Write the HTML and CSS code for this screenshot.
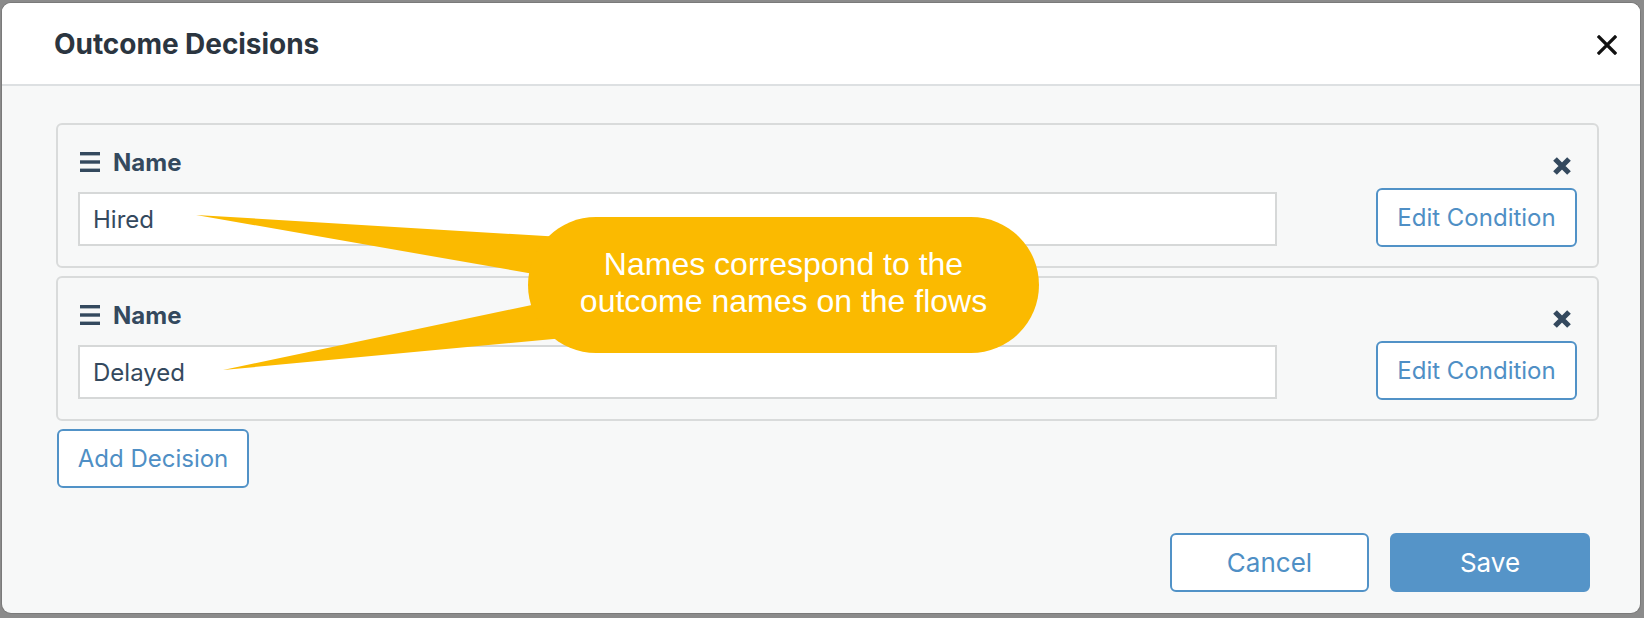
FILE: index.html
```html
<!DOCTYPE html>
<html>
<head>
<meta charset="utf-8">
<link rel="stylesheet" href="styles.css">
</head>
<body>
<div class="backdrop">
  <div class="modal">
    <div class="modal-header">
      <h1 class="modal-title">Outcome Decisions</h1>
      <svg class="close-icon" width="20" height="20" viewBox="0 0 20 20"><path d="M2 2 L18 18 M18 2 L2 18" stroke="#111" stroke-width="3.2" stroke-linecap="square" fill="none"/></svg>
    </div>
    <div class="modal-body">
      <div class="card">
        <div class="card-label">
          <svg class="grip" width="20" height="20" viewBox="0 0 20 20"><rect x="0" y="0" width="20" height="3.4" fill="#34495e"/><rect x="0" y="8.3" width="20" height="3.4" fill="#34495e"/><rect x="0" y="16.6" width="20" height="3.4" fill="#34495e"/></svg>
          <span>Name</span>
        </div>
        <svg class="remove-icon" width="20" height="20" viewBox="0 0 20 20"><path d="M3 3 L17 17 M17 3 L3 17" stroke="#34495e" stroke-width="5.2" stroke-linecap="butt" fill="none"/></svg>
        <input class="text-input" type="text" value="Hired">
        <button class="btn btn-outline btn-edit">Edit Condition</button>
      </div>
      <div class="card">
        <div class="card-label">
          <svg class="grip" width="20" height="20" viewBox="0 0 20 20"><rect x="0" y="0" width="20" height="3.4" fill="#34495e"/><rect x="0" y="8.3" width="20" height="3.4" fill="#34495e"/><rect x="0" y="16.6" width="20" height="3.4" fill="#34495e"/></svg>
          <span>Name</span>
        </div>
        <svg class="remove-icon" width="20" height="20" viewBox="0 0 20 20"><path d="M3 3 L17 17 M17 3 L3 17" stroke="#34495e" stroke-width="5.2" stroke-linecap="butt" fill="none"/></svg>
        <input class="text-input" type="text" value="Delayed">
        <button class="btn btn-outline btn-edit">Edit Condition</button>
      </div>
      <button class="btn btn-outline btn-add">Add Decision</button>
    </div>
    <div class="modal-footer">
      <button class="btn btn-outline btn-footer">Cancel</button>
      <button class="btn btn-primary btn-footer">Save</button>
    </div>
  </div>
</div>

<svg class="callout-tails" width="1644" height="618" viewBox="0 0 1644 618">
  <polygon points="196,215 620,240.5 620,289" fill="#fbba00"/>
  <polygon points="223,370 620,286.4 620,332.7" fill="#fbba00"/>
</svg>
<div class="callout">Names correspond to the<br>outcome names on the flows</div>
</body>
</html>
```

FILE: styles.css
```css
* { box-sizing: border-box; }

html, body {
  margin: 0;
  padding: 0;
}

body {
  width: 1644px;
  height: 618px;
  overflow: hidden;
  background: #8b8b8b;
  position: relative;
  font-family: Inter, "Open Sans", "Liberation Sans", sans-serif;
}

.backdrop {
  padding: 3px 4px 5px 2px;
}

.modal {
  width: 1638px;
  height: 610px;
  background: #f7f8f8;
  border-radius: 9px;
  overflow: hidden;
  display: flex;
  flex-direction: column;
  box-shadow: 0 0 0 1px rgba(0,0,0,0.12);
}

.modal-header {
  height: 83px;
  flex: none;
  background: #ffffff;
  border-bottom: 2px solid #dde0e2;
  display: flex;
  align-items: center;
  justify-content: space-between;
  padding: 0 23px 0 52px;
}

.modal-title {
  margin: 0;
  font-size: 28px;
  font-weight: 700;
  color: #2b3540;
  letter-spacing: -0.05px;
}

.close-icon {
  display: block;
  margin-top: 3px;
}

.modal-body {
  padding: 37px 41px 0 54px;
}

.card {
  border: 2px solid #d9dbdb;
  border-radius: 6px;
  padding: 22px 20px 19px 20px;
  display: grid;
  grid-template-columns: 1fr 201px;
  grid-template-rows: 30px 59px;
  column-gap: 99px;
  row-gap: 11px;
  margin-bottom: 8px;
}

.card-label {
  display: flex;
  align-items: center;
  gap: 13px;
  padding-left: 2px;
  font-size: 24px;
  font-weight: 700;
  color: #34495e;
  line-height: 30px;
}

.card-label span {
  position: relative;
  top: 1px;
}

.grip {
  display: block;
  flex: none;
}

.remove-icon {
  justify-self: end;
  align-self: end;
  margin-right: 5px;
  margin-bottom: 1px;
}

.text-input {
  align-self: end;
  margin-bottom: 1px;
  height: 54px;
  width: 100%;
  border: 2px solid #d6d8d8;
  background: #ffffff;
  padding: 0 13px;
  font-family: Inter, "Open Sans", "Liberation Sans", sans-serif;
  font-size: 24px;
  color: #34495e;
  outline: none;
  border-radius: 0;
}

.btn {
  font-family: Inter, "Open Sans", "Liberation Sans", sans-serif;
  font-size: 24px;
  border-radius: 6px;
  height: 59px;
  padding: 0;
  cursor: pointer;
}

.btn-outline {
  background: #ffffff;
  border: 2px solid #5192c7;
  color: #4f8fc5;
}

.btn-primary {
  background: #5594c8;
  border: 2px solid #5594c8;
  color: #ffffff;
}

.btn-edit {
  width: 201px;
}

.btn-add {
  display: block;
  width: 192px;
  margin-top: 4px;
  margin-left: 1px;
}

.modal-footer {
  margin-top: auto;
  display: flex;
  justify-content: flex-end;
  gap: 21px;
  padding: 0 50px 21px 0;
}

.btn-footer {
  font-size: 26px;
  width: 199px;
}

.btn-primary.btn-footer {
  width: 200px;
}

.callout-tails {
  position: absolute;
  left: 0;
  top: 0;
  pointer-events: none;
}

.callout {
  position: absolute;
  left: 528px;
  top: 217px;
  width: 511px;
  height: 136px;
  border-radius: 68px;
  background: #fbba00;
  color: #ffffff;
  font-family: "Liberation Sans", Arial, sans-serif;
  font-size: 32px;
  line-height: 37px;
  text-align: center;
  display: flex;
  align-items: center;
  justify-content: center;
  padding-bottom: 5px;
}
```
